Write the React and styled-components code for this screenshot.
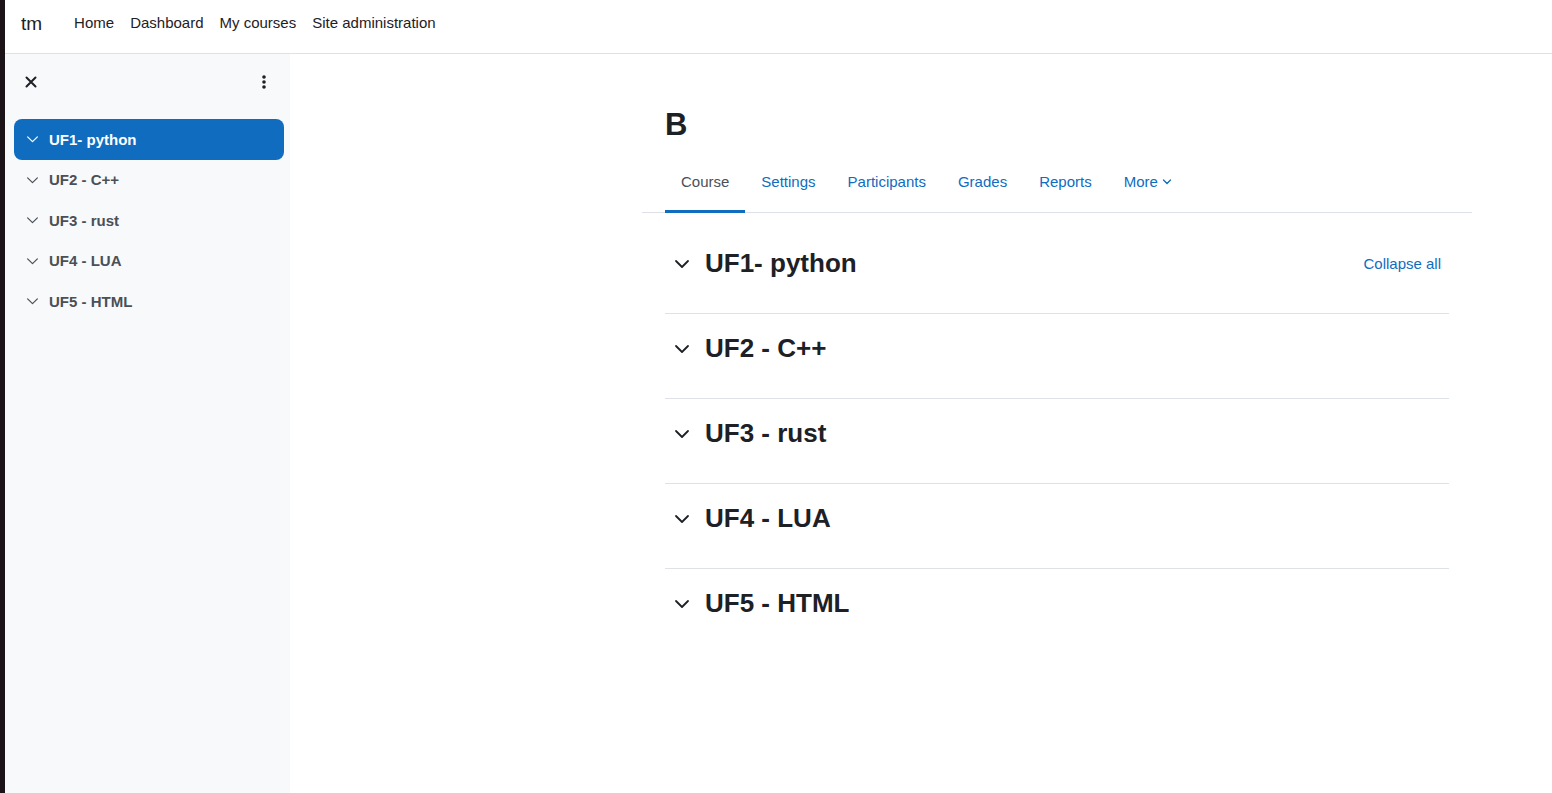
import React from "react";
import styled, { createGlobalStyle } from "styled-components";

const Global = createGlobalStyle`
  html, body { margin: 0; padding: 0; background: #fff; }
  body { font-family: "Liberation Sans", Arial, sans-serif; color: #1d2125; }
  * { box-sizing: border-box; }
`;

const Page = styled.div`
  display: flex;
  min-height: 793px;
  height: 793px;
  overflow: hidden;
`;
const Edge = styled.div`
  width: 5px;
  flex: none;
  background: #1c1318;
`;
const Body = styled.div`
  flex: 1;
  display: flex;
  flex-direction: column;
`;
const TopBar = styled.header`
  height: 54px;
  flex: none;
  display: flex;
  align-items: flex-start;
  border-bottom: 1px solid #dee2e6;
  padding: 0 0 0 16px;
`;
const Brand = styled.div`
  font-size: 19px;
  line-height: 24px;
  margin-top: 12px;
  margin-right: 32px;
  color: #1d2125;
`;
const NavList = styled.nav`
  display: flex;
  gap: 16px;
  margin-top: 13px;
`;
const NavLink = styled.a`
  font-size: 15px;
  line-height: 20px;
  color: #1d2125;
  text-decoration: none;
`;
const Row = styled.div`
  flex: 1;
  display: flex;
`;
const Drawer = styled.aside`
  width: 285px;
  flex: none;
  background: #f8f9fa;
  padding: 0 6px 0 9px;
`;
const DrawerHead = styled.div`
  height: 56px;
  margin-bottom: 9px;
  display: flex;
  align-items: center;
  justify-content: space-between;
  padding: 0 14px 0 11px;
`;
const IconBtn = styled.span`
  display: flex;
  width: 12px;
  justify-content: center;
  color: #1d2125;
`;
const DrawerItem = styled.div`
  display: flex;
  align-items: center;
  height: 40.5px;
  padding-left: 12px;
  border-radius: 8px;
  font-size: 15px;
  font-weight: bold;
  background: ${(p) => (p.$active ? "#0f6cbf" : "transparent")};
  color: ${(p) => (p.$active ? "#fff" : "#495057")};
  & svg { margin-right: 10px; }
`;
const Main = styled.main`
  flex: 1;
  padding-left: 352px;
`;
const Container = styled.div`
  width: 830px;
`;
const Title = styled.h1`
  margin: 0;
  padding: 53px 0 0 23px;
  font-size: 31px;
  line-height: 36px;
  font-weight: bold;
  color: #1d2125;
`;
const Tabs = styled.div`
  margin-top: 19px;
  display: flex;
  padding-left: 23px;
  border-bottom: 1px solid #dee2e6;
`;
const Tab = styled.a`
  display: flex;
  align-items: center;
  gap: 4px;
  padding: 9px 16px 17px;
  margin-bottom: -1px;
  font-size: 15px;
  line-height: 22px;
  text-decoration: none;
  color: ${(p) => (p.$active ? "#495057" : "#0f6cbf")};
  border-bottom: 3px solid ${(p) => (p.$active ? "#0f6cbf" : "transparent")};
`;
const Sections = styled.div`
  margin: 0 23px;
  padding-top: 16px;
`;
const Section = styled.div`
  display: flex;
  align-items: center;
  padding: 19px 8px 34px 9px;
  border-top: ${(p) => (p.$first ? "none" : "1px solid #dee2e6")};
`;
const SectionTitle = styled.h3`
  flex: 1;
  margin: 0;
  font-size: 26px;
  line-height: 31px;
  font-weight: bold;
  color: #1d2125;
`;
const Chevron = styled.span`
  display: flex;
  width: 16px;
  margin-right: 15px;
  color: #1d2125;
`;
const Collapse = styled.a`
  font-size: 15px;
  color: #0f6cbf;
  text-decoration: none;
`;

const ChevronIcon = ({ size = 14, sw = 1.6 }) => (
  <svg width={size} height={size / 2 + 2} viewBox="0 0 16 9" fill="none" stroke="currentColor" strokeWidth={sw} strokeLinecap="round" strokeLinejoin="round">
    <path d="M2 1.5 L8 7.5 L14 1.5" />
  </svg>
);

const items = ["UF1- python", "UF2 - C++", "UF3 - rust", "UF4 - LUA", "UF5 - HTML"];

export default function App() {
  return (
    <>
      <Global />
      <Page>
        <Edge />
        <Body>
          <TopBar>
            <Brand>tm</Brand>
            <NavList>
              <NavLink>Home</NavLink>
              <NavLink>Dashboard</NavLink>
              <NavLink>My courses</NavLink>
              <NavLink>Site administration</NavLink>
            </NavList>
          </TopBar>
          <Row>
            <Drawer>
              <DrawerHead>
                <IconBtn>
                  <svg width="12" height="12" viewBox="0 0 12 12" stroke="currentColor" strokeWidth="2" strokeLinecap="round">
                    <path d="M1.5 1.5 L10.5 10.5 M10.5 1.5 L1.5 10.5" />
                  </svg>
                </IconBtn>
                <IconBtn>
                  <svg width="4" height="16" viewBox="0 0 4 16" fill="currentColor">
                    <circle cx="2" cy="3" r="1.8" />
                    <circle cx="2" cy="8" r="1.8" />
                    <circle cx="2" cy="13" r="1.8" />
                  </svg>
                </IconBtn>
              </DrawerHead>
              {items.map((t, i) => (
                <DrawerItem key={t} $active={i === 0}>
                  <ChevronIcon size={13} sw={1.5} />
                  {t}
                </DrawerItem>
              ))}
            </Drawer>
            <Main>
              <Container>
                <Title>B</Title>
                <Tabs>
                  <Tab $active>Course</Tab>
                  <Tab>Settings</Tab>
                  <Tab>Participants</Tab>
                  <Tab>Grades</Tab>
                  <Tab>Reports</Tab>
                  <Tab>
                    More
                    <svg width="10" height="6" viewBox="0 0 10 6" fill="none" stroke="currentColor" strokeWidth="1.3" strokeLinecap="round">
                      <path d="M1.5 1 L5 4.5 L8.5 1" />
                    </svg>
                  </Tab>
                </Tabs>
                <Sections>
                  {items.map((t, i) => (
                    <Section key={t} $first={i === 0}>
                      <Chevron>
                        <ChevronIcon size={16} sw={1.8} />
                      </Chevron>
                      <SectionTitle>{t}</SectionTitle>
                      {i === 0 && <Collapse>Collapse all</Collapse>}
                    </Section>
                  ))}
                </Sections>
              </Container>
            </Main>
          </Row>
        </Body>
      </Page>
    </>
  );
}
